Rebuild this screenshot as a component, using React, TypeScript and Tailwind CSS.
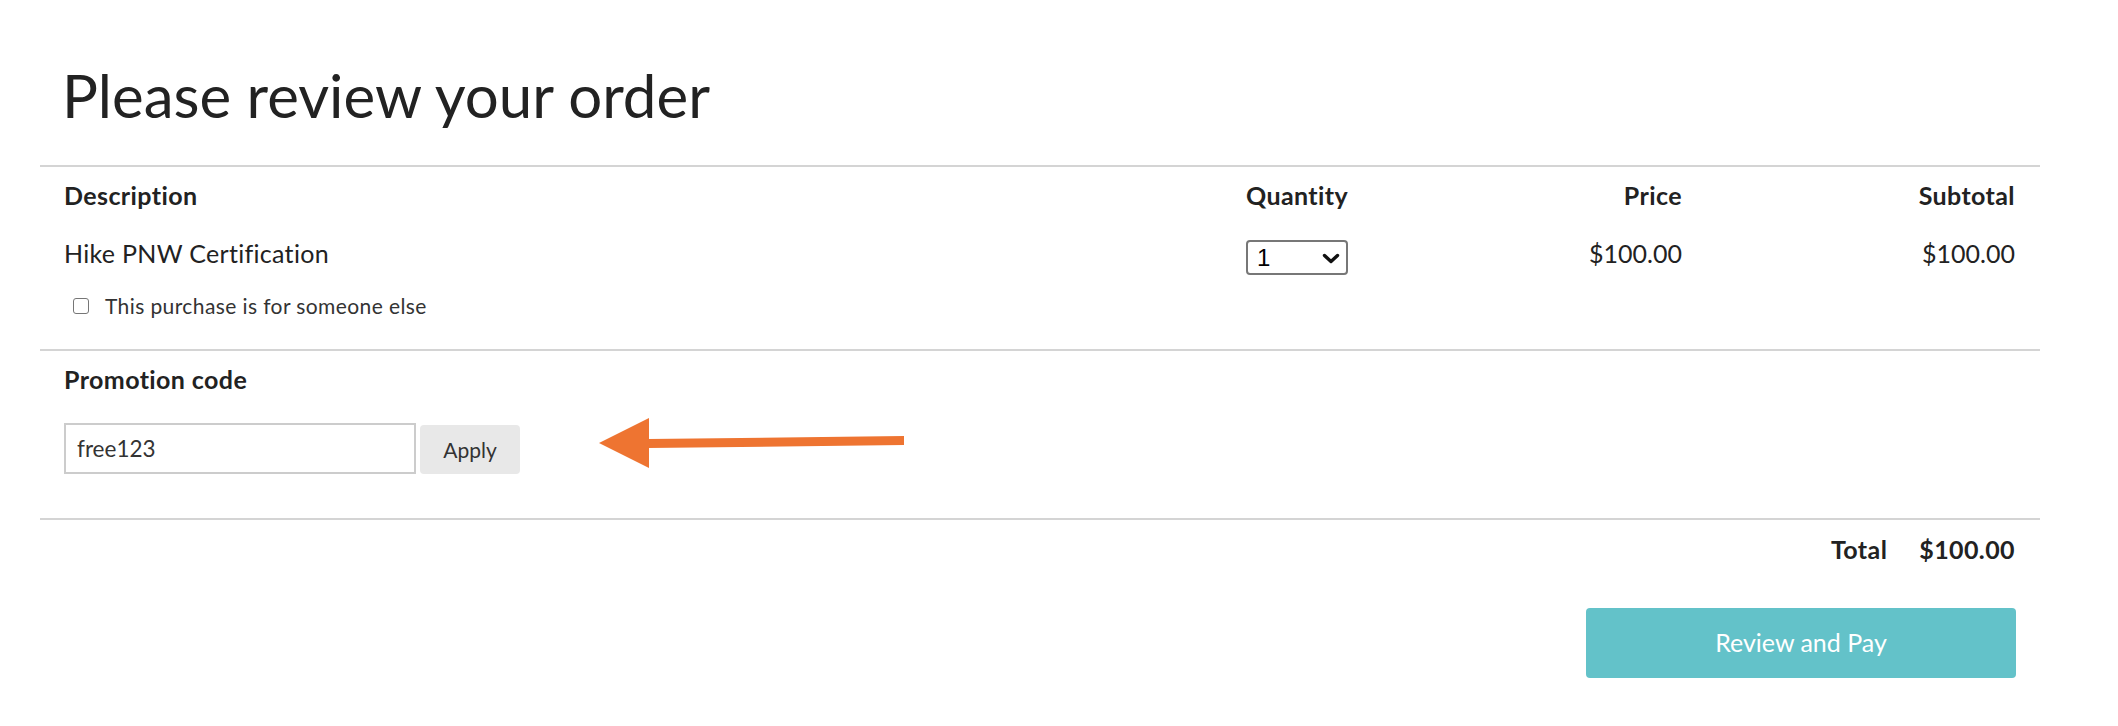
import React, { useState } from 'react';

const ReviewOrder: React.FC = () => {
  const [qty, setQty] = useState('1');
  const [forOther, setForOther] = useState(false);
  const [promo, setPromo] = useState('free123');

  return (
    <div className="min-h-screen bg-white px-[40px] pt-[60px] font-['Lato',sans-serif] text-[#222]">
      <div className="w-[2000px]">
        <h1 className="px-[22px] text-[60px] leading-[70px]">Please review your order</h1>

        {/* items */}
        <div className="mt-[35px] border-t-2 border-[#d4d4d4] pb-[31px]">
          <div className="grid grid-cols-[1182px_220px_264px_334px] pt-[14px] text-[25px] font-bold leading-[28px] tracking-[0.4px]">
            <div className="pl-[24px]">Description</div>
            <div className="pl-[24px]">Quantity</div>
            <div className="pr-[24px] text-right">Price</div>
            <div className="pr-[25px] text-right">Subtotal</div>
          </div>

          <div className="mt-[30px] grid grid-cols-[1182px_220px_264px_334px] items-start text-[25px] leading-[28px]">
            <div className="pl-[24px] tracking-[0.3px]">Hike PNW Certification</div>
            <div className="pl-[24px] pt-[1px]">
              <div className="relative w-[102px]">
                <select
                  value={qty}
                  onChange={(e) => setQty(e.target.value)}
                  className="h-[35px] w-[102px] appearance-none rounded-[4px] border-2 border-[#777] bg-white pl-[9px] font-['Liberation_Sans',sans-serif] text-[24px] leading-[30px] text-black outline-none"
                >
                  {[1, 2, 3, 4, 5].map((n) => (
                    <option key={n} value={n}>
                      {n}
                    </option>
                  ))}
                </select>
                <svg
                  className="pointer-events-none absolute right-[8px] top-[13px]"
                  width="18"
                  height="11"
                  viewBox="0 0 18 11"
                  fill="none"
                >
                  <path d="M2.5 2.5 L9 8.5 L15.5 2.5" stroke="#111" strokeWidth="3.4" strokeLinecap="round" strokeLinejoin="round" />
                </svg>
              </div>
            </div>
            <div className="pr-[24px] text-right">$100.00</div>
            <div className="pr-[25px] text-right">$100.00</div>
          </div>

          <label className="mt-[19px] flex items-center pl-[33px] text-[21px] leading-[24px] tracking-[0.4px] text-[#333]">
            <input
              type="checkbox"
              checked={forOther}
              onChange={(e) => setForOther(e.target.checked)}
              className="h-[16px] w-[16px] appearance-none rounded-[3px] border-[1.5px] border-[#767676] bg-white"
            />
            <span className="ml-[16px]">This purchase is for someone else</span>
          </label>
        </div>

        {/* promotion */}
        <div className="border-t-2 border-[#d4d4d4] px-[24px] pb-[44px] pt-[14px]">
          <div className="text-[25px] font-bold leading-[28px] tracking-[0.4px]">Promotion code</div>
          <div className="mt-[30px] flex items-start">
            <input
              value={promo}
              onChange={(e) => setPromo(e.target.value)}
              className="h-[51px] w-[352px] border-2 border-[#cccccc] bg-white pl-[11px] text-[22.5px] text-[#333] outline-none"
            />
            <button className="ml-[4px] mt-[2px] h-[49px] w-[100px] rounded-[4px] bg-[#e8e8e8] text-[21px] text-[#333]">
              Apply
            </button>
            <svg className="-mt-[5px] ml-[79px]" width="306" height="51" viewBox="0 0 306 51">
              <polygon points="0,25 50,0 50,50" fill="#ee7431" />
              <polygon points="49,21 305,18 305,27 49,30" fill="#ee7431" />
            </svg>
          </div>
        </div>

        {/* total */}
        <div className="border-t-2 border-[#d4d4d4] pt-[15px]">
          <div className="flex justify-end gap-[32px] pr-[25px] text-[25px] font-bold leading-[28px] tracking-[0.4px]">
            <span>Total</span>
            <span>$100.00</span>
          </div>
          <div className="mt-[45px] flex justify-end pr-[24px]">
            <button className="h-[70px] w-[430px] rounded-[4px] bg-[#63c2c9] text-[25px] text-white">
              Review and Pay
            </button>
          </div>
        </div>
      </div>
    </div>
  );
};

export default function App() {
  return <ReviewOrder />;
}
